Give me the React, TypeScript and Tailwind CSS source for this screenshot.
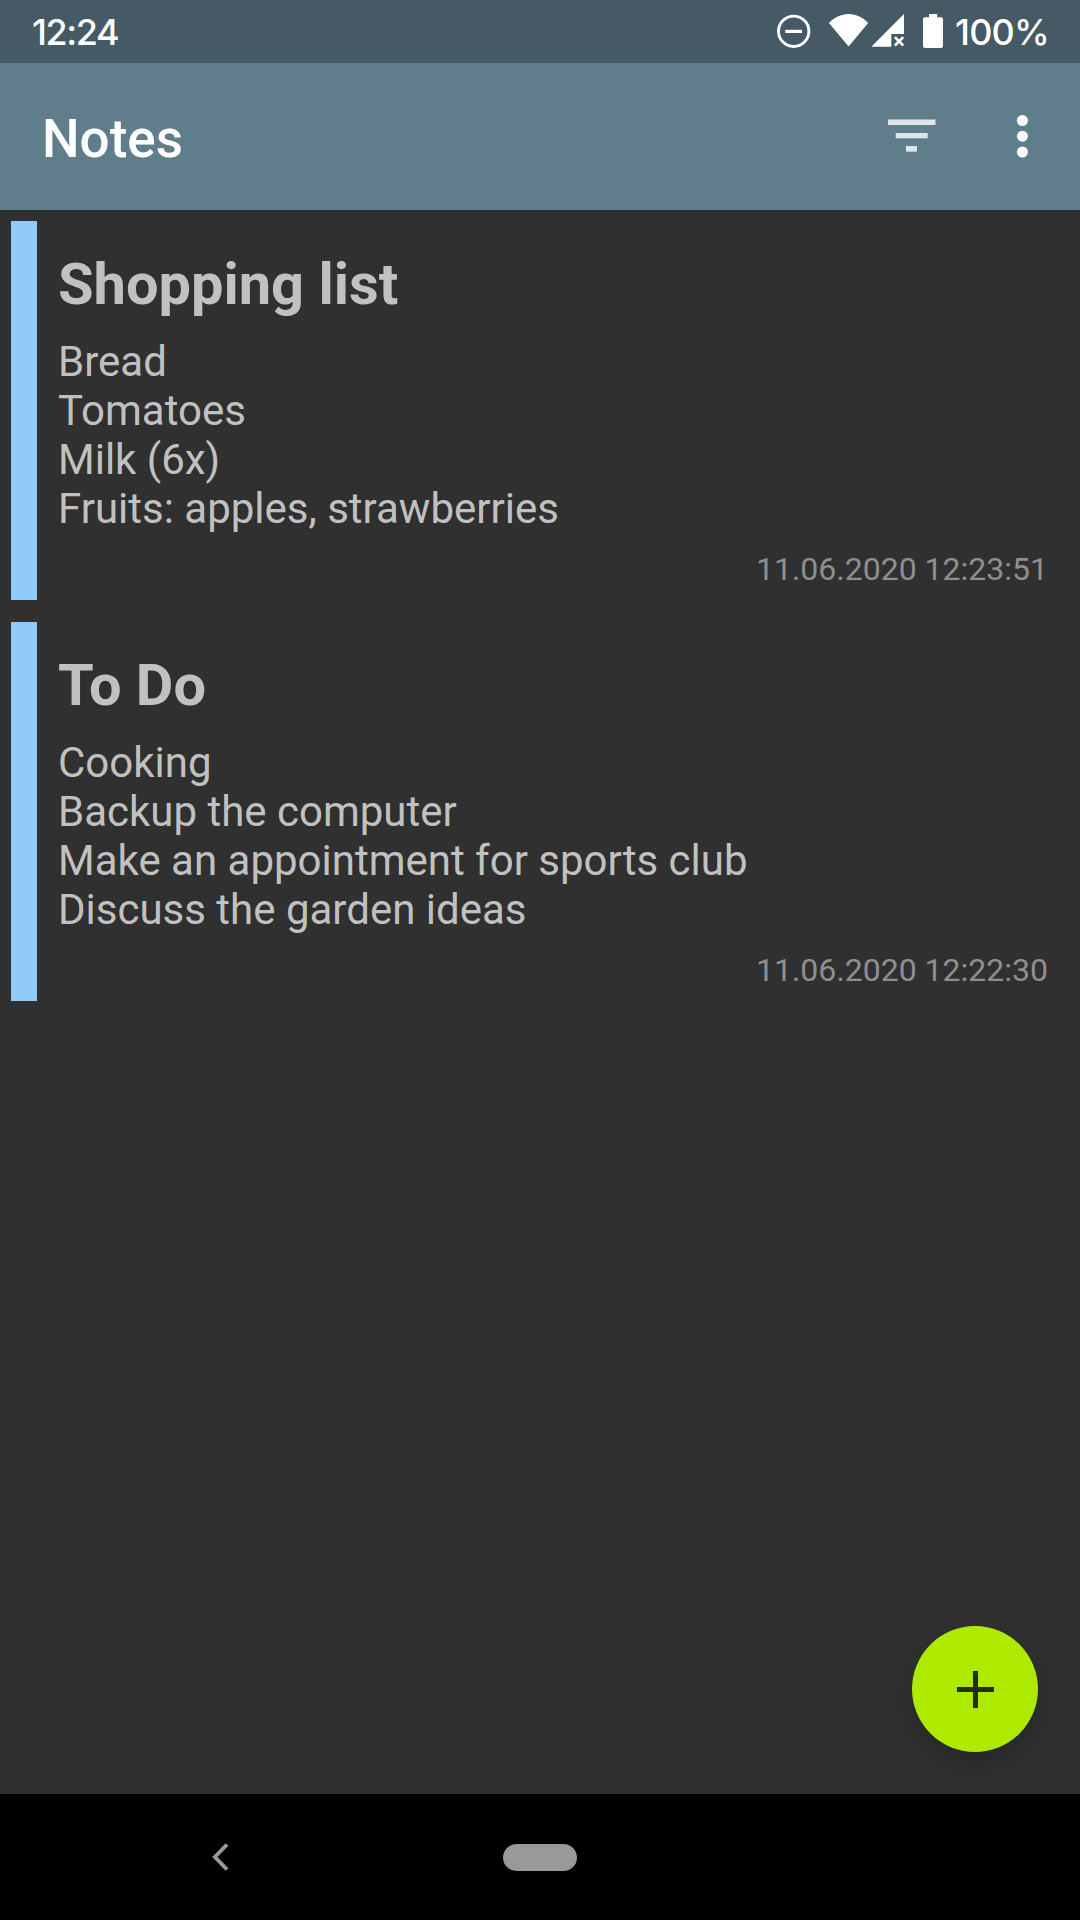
const notes = [
  {
    title: "Shopping list",
    lines: ["Bread", "Tomatoes", "Milk (6x)", "Fruits: apples, strawberries"],
    date: "11.06.2020 12:23:51",
  },
  {
    title: "To Do",
    lines: [
      "Cooking",
      "Backup the computer",
      "Make an appointment for sports club",
      "Discuss the garden ideas",
    ],
    date: "11.06.2020 12:22:30",
  },
];

function StatusBar() {
  return (
    <div className="flex h-[63px] shrink-0 items-center justify-between bg-[#455a64] pr-[31px] pl-[32px] font-['Inter',sans-serif] text-[36px] font-medium text-white">
      <span className="pt-px tracking-[-1.4px]">12:24</span>
      <div className="flex items-center">
        <svg width="168" height="63" viewBox="0 0 168 63" fill="white">
          <circle cx="18.7" cy="31.3" r="15.2" fill="none" stroke="white" strokeWidth="2.9" />
          <rect x="10.2" y="29.8" width="16.8" height="3.2" />
          <path d="M54 23.1C59 17.5 66 14 73.6 14S88 17.5 93.2 23.1L73.6 46.5Z" />
          <path d="M129 14V34H116.3V46.8H96.3Z" />
          <path d="M119.9 37.2L128.2 45.5M128.2 37.2L119.9 45.5" stroke="white" strokeWidth="2.6" />
          <path d="M154 14H162.2V17.2H166Q168 17.2 168 19.2V46Q168 48 166 48H150Q148 48 148 46V19.2Q148 17.2 150 17.2H154Z" />
        </svg>
        <span className="ml-[12px] pt-px tracking-[-0.8px]">100%</span>
      </div>
    </div>
  );
}

function AppBar() {
  return (
    <header className="flex h-[147px] shrink-0 items-center justify-between bg-[#607d8b] pr-[51px] pl-[42px]">
      <h1 className="pt-[5px] text-[53px] leading-[62px] font-medium text-white">Notes</h1>
      <div className="flex items-center gap-[80px]">
        <svg width="48" height="51" viewBox="0 0 48 51" fill="#dfe5e8">
          <rect x="0" y="8.5" width="47.5" height="5.5" />
          <rect x="7.7" y="22" width="32" height="5.3" />
          <rect x="18" y="35" width="11" height="5.7" />
        </svg>
        <svg width="13" height="51" viewBox="0 0 13 51" fill="white">
          <circle cx="6.4" cy="9.5" r="5.5" />
          <circle cx="6.4" cy="25.2" r="5.5" />
          <circle cx="6.4" cy="41" r="5.5" />
        </svg>
      </div>
    </header>
  );
}

function NoteCard({ title, lines, date }: (typeof notes)[number]) {
  return (
    <article className="flex h-[379px]">
      <div className="w-[26px] shrink-0 bg-[#90caf9]" />
      <div className="flex flex-1 flex-col pt-[29px] pr-[21px] pl-[21px]">
        <h2 className="text-[57.75px] leading-[68px] font-bold text-[#c1c1c1]">{title}</h2>
        <div className="mt-[19px] text-[42px] leading-[49px] text-[#c1c1c1]">
          {lines.map((line) => (
            <p key={line}>{line}</p>
          ))}
        </div>
        <time className="mt-[18px] self-end text-[32px] leading-[37px] text-[#8f8f8f]">{date}</time>
      </div>
    </article>
  );
}

export default function App() {
  return (
    <div className="flex h-[1920px] w-[1080px] flex-col overflow-hidden bg-[#303030] font-['Roboto',sans-serif]">
      <StatusBar />
      <AppBar />
      <main className="relative flex flex-1 flex-col gap-[22px] bg-linear-to-b from-[#2b2b2b] to-[#303030] to-[10px] p-[11px]">
        {notes.map((note) => (
          <NoteCard key={note.title} {...note} />
        ))}
        <button
          aria-label="Add note"
          className="absolute right-[42px] bottom-[42px] flex size-[126px] items-center justify-center rounded-full bg-[#aeea00] shadow-[0_10px_22px_rgba(0,0,0,0.22)]"
        >
          <svg width="38" height="38" viewBox="0 0 38 38" fill="#232f00">
            <rect x="1" y="17" width="37" height="5" />
            <rect x="17" y="1" width="5" height="37" />
          </svg>
        </button>
      </main>
      <nav className="grid h-[126px] shrink-0 grid-cols-[440px_200px_440px] items-center justify-items-center bg-black">
        <svg width="18" height="28" viewBox="0 0 18 28" fill="none" stroke="#999999" strokeWidth="3.9">
          <path d="M16 1.5L3.9 14L16 26.5" />
        </svg>
        <div className="h-[27px] w-[74px] rounded-full bg-[#999999]" />
      </nav>
    </div>
  );
}
